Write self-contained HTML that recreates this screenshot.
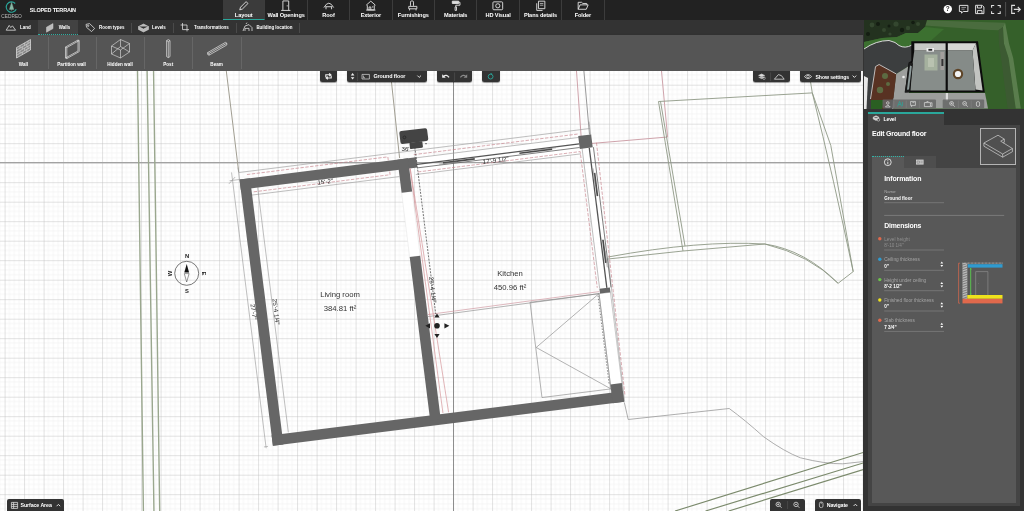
<!DOCTYPE html>
<html><head><meta charset="utf-8"><title>Cedreo - Sloped terrain</title>
<style>
*{box-sizing:border-box;margin:0;padding:0}
html,body{width:1024px;height:511px;overflow:hidden;background:#fff;font-family:"Liberation Sans",sans-serif;color:#fff}
.abs{position:absolute}
#top{position:absolute;left:0;top:0;width:1024px;height:20px;background:#222}
#bar2{position:absolute;left:0;top:20px;width:863px;height:15px;background:#333}
#bar3{position:absolute;left:0;top:35px;width:863px;height:36px;background:#555;box-shadow:0 1px 2px rgba(0,0,0,.55)}
#canvas{position:absolute;left:0;top:71px;width:864px;height:440px;background:#fff;overflow:hidden}
#right{position:absolute;left:863px;top:20px;width:161px;height:491px;background:#333}
.t{position:absolute;white-space:nowrap;line-height:1;transform-origin:0 0}
#top,#bar2,#bar3,#canvas,#right{will-change:transform}
.ttab{position:absolute;top:0;height:20px;width:42.4px;border-right:1px solid #3c3c3c}
.ttab span{position:absolute;left:0;width:100%;text-align:center;top:11.6px;font-size:5.6px;font-weight:bold;line-height:6px;white-space:nowrap;letter-spacing:-.1px}
.ttab svg{position:absolute;left:50%;top:.2px;width:11.600px;height:11.600px;margin-left:-5.800px;overflow:visible}
.sep2{position:absolute;top:22.5px;width:1px;height:10px;background:#4a4a4a}
.l2{position:absolute;top:5.4px;font-size:4.45px;font-weight:bold;line-height:5px;white-space:nowrap}
.sep3{position:absolute;top:37px;width:1px;height:32px;background:#666}
.l3{position:absolute;top:62px;width:48px;text-align:center;font-size:4.6px;font-weight:bold;line-height:5px;white-space:nowrap}
.cbtn{position:absolute;background:#333;border-radius:0 0 2.500px 2.500px;height:10.900px;top:0;box-shadow:0 .5px 1px rgba(0,0,0,.4)}
.dots{background-image:radial-gradient(circle,rgba(255,255,255,.1) .45px,transparent .7px);background-size:4px 4px}
.bbtn{position:absolute;background:#333;border-radius:2px 2px 0 0;height:12px;bottom:0}
</style></head><body>
<!--TOP-->
<div id="top">
<svg class="abs" style="left:0;top:0" width="30" height="20" viewBox="0 0 30 20">
<path d="M15.2 3.5A5.2 5.2 0 1 0 16.2 9.2" fill="none" stroke="#2aa79b" stroke-width="1.1"/>
<path d="M11.6 2.4L9.4 9.4H13.8ZM11.6 9V11" fill="#86b9a6" stroke="#86b9a6" stroke-width=".4"/>
<text x="11.6" y="17.5" font-size="4.8" fill="#bdbdbd" text-anchor="middle" font-family="Liberation Sans, sans-serif">CEDREO</text>
</svg>
<div class="t" style="left:29.8px;top:7.7px;font-size:5.5px;font-weight:bold;letter-spacing:-.18px">SLOPED TERRAIN</div>
<div class="ttab dots" style="left:223px;background-color:#3b3b3b;border-bottom:1px solid #2aa79b"><svg viewBox="0 0 10 10"><path d="M1.5 8.5L2.2 6.2L7 1.4L8.6 3L3.8 7.8Z" fill="none" stroke="#ddd" stroke-width=".8"/></svg><span>Layout</span></div>
<div class="ttab" style="left:265.4px"><svg viewBox="0 0 10 10"><path d="M2.5 9V.8H7.5V9M1 9H9" fill="none" stroke="#ddd" stroke-width=".8"/><circle cx="6.2" cy="5" r=".5" fill="#ddd"/></svg><span>Wall Openings</span></div>
<div class="ttab" style="left:307.8px"><svg viewBox="0 0 10 10"><path d="M.8 6.5Q5 -1 9.2 6.5M2 5.8H8M2.6 5.8V8M7.4 5.8V8" fill="none" stroke="#ddd" stroke-width=".8"/></svg><span>Roof</span></div>
<div class="ttab" style="left:350.2px"><svg viewBox="0 0 10 10"><path d="M1 4.5L5 1L9 4.5M2 4.5V8.5H8V4.5M1 8.7H9M3.5 8.5V6H5V8.5M6 6H7.2" fill="none" stroke="#ddd" stroke-width=".8"/></svg><span>Exterior</span></div>
<div class="ttab" style="left:392.6px"><svg viewBox="0 0 10 10"><path d="M3 5V1.8Q3 .8 4 .8H4.6Q5.6 .8 5.6 1.8V5M1.5 5.5H8.5V7.6H1.5ZM2.2 7.6V9M7.8 7.6V9" fill="none" stroke="#ddd" stroke-width=".8"/></svg><span>Furnishings</span></div>
<div class="ttab" style="left:435px"><svg viewBox="0 0 10 10"><path d="M2 1H7.5V3H2ZM7.5 2H8.6V4.5H5V6M4.4 6H5.6V9H4.4Z" fill="none" stroke="#ddd" stroke-width=".8"/><rect x="2" y="1" width="5.5" height="2" fill="#ddd"/></svg><span>Materials</span></div>
<div class="ttab" style="left:477.4px"><svg viewBox="0 0 10 10"><rect x=".8" y="1.6" width="8.4" height="6.8" rx=".8" fill="none" stroke="#ddd" stroke-width=".8"/><circle cx="5" cy="5" r="1.8" fill="none" stroke="#ddd" stroke-width=".8"/></svg><span>HD Visual</span></div>
<div class="ttab" style="left:519.8px"><svg viewBox="0 0 10 10"><path d="M3 1H8.5V7.5H3ZM1.5 2.8V9H6.5" fill="none" stroke="#ddd" stroke-width=".8"/><path d="M4.2 3H7.2M4.2 4.5H7.2" stroke="#ddd" stroke-width=".6"/></svg><span>Plans details</span></div>
<div class="ttab" style="left:562.2px"><svg viewBox="0 0 10 10"><path d="M1 8V2H4L5 3H8.4V4.2M1 8L2.6 4.2H9.6L8 8Z" fill="none" stroke="#ddd" stroke-width=".8"/></svg><span>Folder</span></div>
<svg class="abs" style="left:940px;top:1px" width="84" height="18" viewBox="940 1 84 18">
<circle cx="947.800" cy="9.100" r="4.200" fill="#fff"/>
<text x="947.800" y="11.400" font-size="6.400" font-weight="bold" fill="#222" text-anchor="middle" font-family="Liberation Sans, sans-serif">?</text>
<path d="M959.400 5.400H967.900V11.500H963.200L961.500 13.100V11.500H959.400Z" fill="none" stroke="#ddd" stroke-width="1" stroke-linejoin="round"/><path d="M961.400 7.400H966M961.400 9.200H964.600" stroke="#ddd" stroke-width=".6"/>
<path d="M975.600 5.300H982.200L983.900 7V13.600H975.600ZM977.400 5.500V8H981.400V5.500M977.400 13.600V10.600H982V13.600" fill="none" stroke="#ddd" stroke-width="1" stroke-linejoin="round"/>
<path d="M991.600 7.800V5.500H994.200M997.600 5.500H1000.200V7.800M1000.200 11.200V13.500H997.600M994.200 13.500H991.600V11.200" fill="none" stroke="#ddd" stroke-width="1.100"/>
<path d="M1005.600 2V16.500" stroke="#555" stroke-width=".9"/>
<path d="M1015 5.400H1011.700V13.400H1015M1013.800 9.400H1020M1017.800 7L1020.300 9.400L1017.800 11.800" fill="none" stroke="#ddd" stroke-width="1.100"/>
</svg>
</div>

<!--BAR2-->
<div id="bar2">
<div class="abs dots" style="left:38px;top:0;width:39.5px;height:15px;background-color:#424242;border-bottom:1px dotted #2fb5a8"></div>
<svg class="abs" style="left:0;top:0" width="300" height="15" viewBox="0 20 300 15">
<g fill="none" stroke="#ddd" stroke-width=".8">
<path d="M6.2 30.2L9.2 25.4L10.8 27.6L12.4 25.8L15.6 30.2Z"/>
<path d="M46.5 27.2L53 23.6V28.6L46.5 32.2Z" fill="#bbb" stroke="#ccc" stroke-width=".5"/>
<path d="M86 24.4L89.6 23.6L94.6 28.4L91.6 31.6L86.6 27.4Z"/><circle cx="88.2" cy="25.8" r=".7"/>
<path d="M138.5 26.5L143.5 24L148.5 26.5V29.5L143.5 32L138.5 29.5ZM138.5 26.5L143.5 29L148.5 26.5" fill="#bbb" stroke="#ddd" stroke-width=".5"/>
<path d="M182.5 23V29.6H189M180.6 25H187V31.4" />
<path d="M243 31L245 26L249 24.6L252 27.6V31M245 31V28.4H249V31M246 24L247 22.6"/>
</g>
</svg>
<div class="l2" style="left:20px">Land</div>
<div class="l2" style="left:58.8px">Walls</div>
<div class="l2" style="left:99px">Room types</div>
<div class="l2" style="left:152px">Levels</div>
<div class="l2" style="left:194px">Transformations</div>
<div class="l2" style="left:256.4px">Building location</div>
</div>
<div class="sep2" style="left:131px"></div><div class="sep2" style="left:172.5px"></div><div class="sep2" style="left:235.5px"></div><div class="sep2" style="left:299px"></div>

<!--BAR3-->
<div id="bar3">
<svg class="abs" style="left:0;top:0" width="245" height="36" viewBox="0 35 245 36">
<g fill="none" stroke="#e4e4e4" stroke-width=".7" stroke-linejoin="round">
<path d="M16.5 47.5L30.5 39.5V50L16.5 58Z" fill="rgba(255,255,255,.3)"/>
<path d="M16.5 50.1L30.5 42.1M16.5 52.7L30.5 44.7M16.5 55.3L30.5 47.3M20 45.5V48.1M24.6 42.9V45.5M28 41V43.5M22.3 46.8V49.4M26.8 44.2V46.8M20 50.7V53.3M24.6 48.1V50.7M28 46.2V48.8M22.3 52V54.6M26.8 49.4V52" stroke-width=".5"/>
<path d="M65.5 47L78 40V51L65.5 58ZM65.5 47L66.8 47.6L79.2 40.6L78 40M66.8 47.6V58.6L65.5 58M66.8 58.6L79.2 51.6V40.6"/>
<path d="M111.5 46L120.5 39.5L129.5 43.5V52L120.5 58L111.5 54ZM111.5 46L120.5 50V58M120.5 50L129.5 43.5M120.5 39.5V46.5L111.5 54M120.5 46.5L129.5 52" stroke-width=".6"/>
<path d="M166.6 40.6L168.3 39.6L170 40.6V56.6L168.3 57.6L166.6 56.6ZM166.6 40.6L168.3 41.6L170 40.6M168.3 41.6V57.6"/>
<path d="M207.6 52.6L225.4 42.4L226.8 43.2V45L209 55.2L207.6 54.4ZM207.6 52.6L209 53.4L226.8 43.2M209 53.4V55.2"/>
</g>
</svg>
<div class="l3" style="left:-.6px;top:26.6px">Wall</div>
<div class="l3" style="left:47.6px;top:26.6px">Partition wall</div>
<div class="l3" style="left:96px;top:26.6px">Hidden wall</div>
<div class="l3" style="left:144.2px;top:26.6px">Post</div>
<div class="l3" style="left:192.6px;top:26.6px">Beam</div>
</div>
<div class="sep3" style="left:47.5px"></div><div class="sep3" style="left:95.7px"></div><div class="sep3" style="left:144px"></div><div class="sep3" style="left:192.4px"></div><div class="sep3" style="left:240.7px"></div>

<!--CANVAS-->
<div id="canvas">
<svg width="864" height="440" viewBox="0 71 864 440" style="position:absolute;left:0;top:0">
<defs>
<pattern id="gmin" x="4.600" y="84.700" width="19.5" height="19.5" patternUnits="userSpaceOnUse">
<path d="M4.875 0V19.5M9.75 0V19.5M14.625 0V19.5M0 4.875H19.5M0 9.75H19.5M0 14.625H19.5" stroke="#f0f0f0" stroke-width=".6" fill="none"/>
<path d="M0 0V19.5M0 0H19.5" stroke="#c4c4c4" stroke-width="1" fill="none"/>
</pattern>
</defs>
<rect x="0" y="71" width="864" height="440" fill="#fff"/>
<rect x="0" y="71" width="864" height="440" fill="url(#gmin)"/>
<g transform="translate(239.5 179.5) rotate(-7.15)"><rect x="175.500" y=".5" width="167" height="16.5" fill="#fff"/>
<rect x="343.800" y="11.5" width="11.400" height="142" fill="#fff"/>
</g>
<!-- guide lines -->
<g fill="none" stroke-width=".8">
<path d="M0 162.700H864" stroke="#a2a2a2" stroke-width="1.200"/>
<path d="M453.5 71V511" stroke="#777"/>
<!-- left olive verticals -->
<path d="M137.500 71L143.400 511M147.100 71L153.950 511M153.550 71L159.700 511" stroke="#9aa78e" stroke-width="1.400"/>
<path d="M226.300 71L238.700 172" stroke="#a19e92" stroke-width="1"/>
<path d="M390.300 71L399.600 158" stroke="#a19e92" stroke-width="1"/>
<path d="M583.900 71L589.500 134.500" stroke="#999" stroke-width="1"/>
<path d="M576.500 71L581.100 136" stroke="#cfa3ab" stroke-width="1"/>
<path d="M661.500 71L667.600 137L591 143.500" stroke="#cfa3ab" stroke-width="1"/>
<!-- terrain right -->
<path d="M658.5 101.5L812.3 92.9M808.800 71L812.3 92.9L830.8 145.5L853.2 271.6L838.1 283.3Q805 250 764.9 244L683 251L658.5 101.5M812.3 92.9Q834 180 853.2 271.6M660.5 101.4L685 246M608 257Q700 240 764.9 244Q810 255 838.1 283.3M608 259L683 251" stroke="#8f9886" stroke-width=".9"/>
<!-- lower right -->
<path d="M624.3 402.4L628.2 419.5L729.2 408.5Q745 420 763.5 436.7Q785 452 800.4 457.8Q825 464 842.6 463.8L864 461.5" stroke="#999"/>
<path d="M675 511L864 452.2M705.5 511L864 462.7M728.7 511L864 469.3" stroke="#7b8a6c" stroke-width="1.200"/>
</g>
<!--BUILDING-->
<g transform="translate(239.5 179.5) rotate(-7.15)">
<!-- dimension/offset lines -->
<g fill="none" stroke="#999" stroke-width=".6">
<path d="M-7 -8V270M-10 0H0M-9 268.400H-5M-11 3L-4 -3"/>
<path d="M0 -7H354M0 -12V0M354 -14V0"/>
<path d="M17 10V257M10 17H159"/>
<path d="M175.500 17H342M343.800 11.500V153M175.500 .5H342"/>
<path d="M355.800 124L354.500 268.400" stroke="#999"/>
</g>
<g fill="none" stroke="#c47c86" stroke-width=".6" stroke-dasharray="3.400 1.500">
<path d="M8 -4H150V14H12"/>
<path d="M176 -3H341.500M178 14.700H341.500V152M358.800 8L355.600 262"/>
</g>
<!-- white opening in interior wall -->
<rect x="159.200" y="33.300" width="10.600" height="65" fill="#fff" stroke="#ddd" stroke-width=".4"/>
<!-- white right wall lower part -->
<rect x="342.5" y="158" width="11.5" height="100" fill="#fff" stroke="#999" stroke-width=".5"/>
<!-- thick walls -->
<g fill="#666">
<rect x="0" y="0" width="178" height="10.300"/>
<rect x="0" y="0" width="10.600" height="268.400"/>
<rect x="0" y="257.800" width="354" height="10.600"/>
<rect x="159.200" y="0" width="10.600" height="33.300"/>
<rect x="159.200" y="98.200" width="10.600" height="165"/>
<rect x="341.500" y="-1" width="13" height="13"/>
<rect x="343.500" y="153.300" width="10.500" height="4.700"/>
<rect x="342.500" y="249.500" width="11.500" height="18.900"/>
</g>
<!-- thin walls kitchen -->
<g fill="none" stroke="#555">
<path d="M178 7H341.500" stroke-width="1.300"/>
<path d="M178 10.600H341.500" stroke-width=".8" stroke="#666"/>
<path d="M351 12V153.300" stroke-width="1.300"/>
<path d="M355.200 12V153.300" stroke-width=".8" stroke="#666"/>
<path d="M204 8.800H236M281 8.800H314M353.100 37.700V61M353.100 105V128.300" stroke-width="1.700" stroke="#4a4a4a"/>
<path d="M200 9.700H218M296 7.900H318M352.200 33V50M354 116V133" stroke-width=".6" stroke="#888"/>
</g>
<path d="M341.300 160V250" stroke="#666" stroke-width=".7" stroke-dasharray="1.500 1.500" fill="none"/>
<!-- room separation -->
<path d="M170 157.500L343 156" stroke="#d4a0a8" stroke-width=".7" fill="none"/>
<path d="M170 159.500L343 158" stroke="#999" stroke-width=".7" fill="none"/>
<!-- stairs rect -->
<path d="M273 158H342.500V254H273ZM342.500 158L273.500 203.600L342.500 254" stroke="#888" stroke-width=".6" fill="none"/>
<!-- interior thin lines right of interior wall -->
<path d="M170.600 10.300L172.800 257M170.800 10.300L178.500 257" stroke="#d08a90" stroke-width=".6" fill="none"/>
<path d="M178 -10V158" stroke="#444" stroke-width=".7" stroke-dasharray="2 1.2" fill="none"/>
</g>
<!--/BUILDING-->
<!-- compass -->
<g font-family="Liberation Sans, sans-serif" font-weight="bold" font-size="5.8" fill="#222" text-anchor="middle">
<circle cx="186.7" cy="273.3" r="12" fill="none" stroke="#555" stroke-width=".8"/>
<path d="M186.7 264L184.3 272.6H189.1Z" fill="#111"/>
<path d="M184.3 273.6H189.1L186.7 282Z" fill="#fff" stroke="#333" stroke-width=".5"/>
<text x="187" y="258">N</text>
<text x="187" y="293.2">S</text>
<text transform="translate(171.6 273.4) rotate(-90)">W</text>
<text transform="translate(202 273.4) rotate(90)">E</text>
</g>
<!-- camera -->
<g transform="translate(413.8 136.2) rotate(-7)">
<rect x="-14" y="-6.6" width="28" height="13" rx="2" fill="#444"/>
<rect x="-5.2" y="6" width="13" height="6.4" rx="1" fill="#444"/>
<circle cx="-9.4" cy="0" r="1.4" fill="none" stroke="#222" stroke-width=".6"/>
</g>
<g font-family="Liberation Sans, sans-serif" fill="#333" text-anchor="middle">
<text x="340" y="297" font-size="7.7">Living room</text>
<text x="340" y="310.8" font-size="7.7">384.81 ft²</text>
<text x="510" y="275.8" font-size="7.7">Kitchen</text>
<text x="510" y="289.8" font-size="7.7">450.96 ft²</text>
<g font-size="6.2" fill="#222">
<text transform="translate(325.5 183.8) rotate(-7.15)">15'-2"</text>
<text transform="translate(496 162.4) rotate(-7.15)">17'-9 1/2"</text>
<text transform="translate(274 312) rotate(82.85)">25'-4 1/4"</text>
<text transform="translate(251.6 312) rotate(82.85)">27'-7"</text>
<text transform="translate(430.6 290) rotate(82.85)">25'-4 1/4"</text>
<text x="405.5" y="150.6">36'</text>
<text x="426" y="147">"</text>
</g>
</g>
<!-- move cursor -->
<g fill="#222"><circle cx="437" cy="325.8" r="2.8"/><path d="M437 313.600L439.600 317.600H434.400ZM437 338L439.600 334H434.400ZM425.400 325.800L430 323.200V328.400ZM449.400 325.800L444.400 323.200V328.400Z"/></g>
<!--/LABELS-->
</svg>
<!-- canvas toolbar buttons -->
<div class="cbtn" style="left:320px;width:17px"><svg class="abs" style="left:0;top:0" width="17" height="11.5" viewBox="0 0 17 11.5"><path d="M5.800 6.200V3.800H10.400M9.200 2.400L10.800 3.800L9.200 5.200M11.200 4.600V7H6.600M7.800 5.600L6.200 7L7.800 8.400" fill="none" stroke="#eee" stroke-width="1.100"/></svg></div>
<div class="cbtn" style="left:347px;width:80px"><svg class="abs" style="left:0;top:0" width="80" height="11.5" viewBox="0 0 80 11.5"><path d="M3.800 4.400L5.600 2L7.400 4.400ZM3.800 6.200L5.600 8.600L7.400 6.200Z" fill="#eee"/><path d="M10.6 1.5V10" stroke="#555" stroke-width=".6"/><path d="M15 3.4H22.4V8H15ZM16.4 4.6V6.8H18" fill="none" stroke="#ddd" stroke-width=".7"/><path d="M70.4 4.6L72.2 6.4L74 4.6" fill="none" stroke="#eee" stroke-width=".9"/></svg><div class="t" style="left:26.400px;top:3.100px;font-size:5.400px;font-weight:bold;letter-spacing:-.08px">Ground floor</div></div>
<div class="cbtn" style="left:436.5px;width:35.5px"><svg class="abs" style="left:0;top:0" width="35.5" height="11.5" viewBox="0 0 35.5 11.5"><path d="M6.600 5.400Q9.400 3 12 6.400" fill="none" stroke="#eee" stroke-width="1.300"/><path d="M5.200 3.200V6.800H8.800Z" fill="#eee"/><path d="M17.6 1.5V10" stroke="#555" stroke-width=".6"/><path d="M28.800 5.400Q26 3 23.400 6.400" fill="none" stroke="#8a8a8a" stroke-width="1.200"/><path d="M30.200 3.200V6.800H26.600Z" fill="#8a8a8a"/></svg></div>
<div class="cbtn" style="left:482px;width:17.5px"><svg class="abs" style="left:0;top:0" width="17.5" height="11.5" viewBox="0 0 17.5 11.5"><circle cx="8.6" cy="5.6" r="2.4" fill="none" stroke="#2aa79b" stroke-width=".9"/><path d="M8.6 2V3.6L10.4 2.8Z" fill="#2aa79b"/></svg></div>
<div class="cbtn" style="left:753.400px;width:36.600px"><svg class="abs" style="left:0;top:0" width="35.5" height="11.5" viewBox="0 0 35.5 11.5"><path d="M5.6 4.4L8.6 3L11.6 4.4L8.6 5.8ZM5.6 6.2L8.6 7.6L11.6 6.2" fill="#ddd" stroke="#ddd" stroke-width=".6"/><circle cx="11" cy="7.2" r="1.3" fill="none" stroke="#ddd" stroke-width=".5"/><path d="M17.6 1.5V10" stroke="#555" stroke-width=".6"/><path d="M21.4 8.2L25.4 3.6L28.4 4.6L31.2 8.2Z" fill="none" stroke="#ddd" stroke-width=".8"/></svg></div>
<div class="cbtn" style="left:799.5px;width:61px"><svg class="abs" style="left:0;top:0" width="61" height="11.5" viewBox="0 0 61 11.5"><path d="M4.4 5.6Q8 1.6 11.6 5.6Q8 9.6 4.4 5.6Z" fill="none" stroke="#ddd" stroke-width=".8"/><circle cx="8" cy="5.6" r="1.3" fill="none" stroke="#ddd" stroke-width=".7"/><path d="M52.6 4.6L54.4 6.4L56.2 4.6" fill="none" stroke="#eee" stroke-width=".9"/></svg><div class="t" style="left:16px;top:3.500px;font-size:5.200px;font-weight:bold;letter-spacing:-.12px">Show settings</div></div>
<div class="bbtn" style="left:6.900px;width:56.700px;height:11.600px"><svg class="abs" style="left:0;top:0" width="57" height="12" viewBox="0 0 57 12"><path d="M4.4 3.4H10.6V9.4H4.4ZM4.4 5.4H10.6M4.4 7.4H10.6M6.6 3.4V9.4" fill="none" stroke="#ddd" stroke-width=".8"/><path d="M49.6 7.2L51.4 5.4L53.2 7.2" fill="none" stroke="#eee" stroke-width=".9"/></svg><div class="t" style="left:13.6px;top:3.8px;font-size:5.3px;font-weight:bold;letter-spacing:-.1px">Surface Area</div></div>
<div class="bbtn" style="left:769.500px;width:35.500px;height:11.800px"><svg class="abs" style="left:0;top:0" width="35.5" height="11.5" viewBox="0 0 35.5 11.5"><circle cx="8.2" cy="5.4" r="2.2" fill="none" stroke="#ddd" stroke-width=".8"/><path d="M9.8 7L11.6 8.8M7.2 5.4H9.2M8.2 4.4V6.4" stroke="#ddd" stroke-width=".8"/><path d="M17.6 2V10" stroke="#555" stroke-width=".6"/><circle cx="26" cy="5.4" r="2.2" fill="none" stroke="#ddd" stroke-width=".8"/><path d="M27.6 7L29.4 8.8M25 5.4H27" stroke="#ddd" stroke-width=".8"/></svg></div>
<div class="bbtn" style="left:814.500px;width:46.200px;height:11.800px"><svg class="abs" style="left:0;top:0" width="47" height="11.5" viewBox="0 0 47 11.5"><rect x="4.4" y="3" width="3.6" height="5.6" rx="1.6" fill="none" stroke="#ddd" stroke-width=".7"/><path d="M6.2 3V5" stroke="#ddd" stroke-width=".6"/><path d="M38.6 7L40.4 5.2L42.2 7" fill="none" stroke="#eee" stroke-width=".9"/></svg><div class="t" style="left:12.2px;top:3.4px;font-size:5.3px;font-weight:bold;letter-spacing:-.1px">Navigate</div></div>
</div>
<!--RIGHT-->
<div id="right">
<!--3D-->
<svg class="abs" style="left:1px;top:0" width="160" height="88.6" viewBox="864 20 160 88.6">
<rect x="864" y="20" width="160" height="89" fill="#35602a"/>
<path d="M925 20.300L1005.100 22.700L1003 27L998.500 30.200L984 29.800L925 25.600Z" fill="#4a6c3e"/>
<path d="M1003 27L1004 43.500L1008.600 58L1015.750 108.600H1007.600L1001 58L998.900 43.500L998.500 30.200Z" fill="#3c5a32"/>
<path d="M1005.100 22.700L1006.500 30L1009 43.500L1013.200 58L1020.800 108.600H1015.750L1008.600 58L1004 43.500L1003 27Z" fill="#5a7d4d"/>
<path d="M864 20H927L925 27L918 33L906 33L897 37L882 38L864 42Z" fill="#23321f"/>
<g fill="#34472f"><circle cx="872" cy="25" r="2.400"/><circle cx="884" cy="30" r="2"/><circle cx="896" cy="24" r="2.600"/><circle cx="908" cy="28" r="2.200"/><circle cx="918" cy="24" r="2"/><circle cx="890" cy="34" r="1.600"/></g>
<g fill="#141d12"><circle cx="878" cy="24" r="2"/><circle cx="902" cy="30" r="2.200"/><circle cx="913" cy="22.500" r="1.800"/><circle cx="868" cy="34" r="2"/><circle cx="889" cy="26" r="1.500"/></g>
<path d="M864 42L882 38L897 37L906 33L918 33L925 27L944 29L926 45H912Q905 49 899 45.500Q896 42 889 40.500Q876 40.500 864 49Z" fill="#3c7030"/>
<path d="M864 49Q876 40.500 889 40.500Q896 42 899 45.500Q905 49 912 45V64L896 74L894 109H864Z" fill="#3c3e3f"/>
<path d="M864 49Q876 40.500 889 40.500Q896 42 899 45.500Q905 49 912 45" fill="none" stroke="#d8d8d8" stroke-width="1"/>
<path d="M864 76L868 78L866.500 109H864Z" fill="#e8e8e8"/>
<path d="M896.200 73.900L909 66V93L904 100L893 109H892Z" fill="#9d9f9d"/>
<path d="M872 109L870.500 99L875.500 66.600L879.100 64.500L896.200 73.900L893.500 98L884 109Z" fill="#583222"/>
<path d="M870.500 99L875.500 66.600L879.100 64.500L896.200 73.900" fill="none" stroke="#ddd" stroke-width=".8"/>
<g fill="#5e7a4a" opacity=".8"><circle cx="885" cy="76" r="3"/><circle cx="880" cy="90" r="3.200"/><circle cx="888" cy="84" r="2"/></g>
<path d="M871 100H884L882 109H871Z" fill="#2a5f22"/>
<circle cx="903.500" cy="77" r="1.300" fill="#eee"/>
<!-- house -->
<path d="M911.300 41.300H978L984.800 92.600H905L908.600 62.500L911.300 61Z" fill="#0c0c0c"/>
<path d="M914.300 43.300H945.600V50.600H914.300Z" fill="#c6c8c5"/>
<path d="M947.800 43.300H976L972.500 50.600H947.800Z" fill="#d6d7d4"/>
<path d="M976 43.300L982.600 90.400L975.500 89.600L972.500 50.600Z" fill="#c2c4c1"/>
<path d="M914.300 50.600H945.600V90.600H910.500L912.600 63Z" fill="#878d8a"/>
<path d="M947.800 50.600H972.500L975.500 90.600H947.800Z" fill="#858b88"/>
<rect x="926.5" y="48" width="7.5" height="3.6" fill="#eee"/><rect x="928.4" y="48.9" width="3.8" height="1.8" fill="#222"/>
<rect x="924.5" y="54.5" width="13" height="16" fill="#a9b5a0" opacity=".9"/><rect x="928" y="58" width="6" height="9" fill="#b9c2b0"/>
<rect x="940.4" y="52" width="3.6" height="18" fill="#a29e9c"/><rect x="941.4" y="59" width="2" height="7" fill="#333"/>
<circle cx="958" cy="74" r="5.2" fill="#5e4427"/><circle cx="958" cy="74" r="3.1" fill="#f2f2f2"/>
<path d="M909.4 62L913 63.6L909.6 92L904.6 92.6Z" fill="#1c1c1c"/><path d="M910 65.4L911.8 66.2L909 89.6L907 89.8Z" fill="#8d9a9a"/>
<path d="M904 93H985L988 108.600H894Z" fill="#9c9e9c"/>
<path d="M945.8 93H948V101H945.8Z" fill="#ddd"/>
<!-- toolbar -->
<rect x="882.500" y="99.600" width="53.500" height="9" rx="1" fill="#666" opacity=".85"/>
<rect x="942.700" y="99.600" width="41.500" height="9" rx="1" fill="#666" opacity=".85"/>
<g fill="none" stroke="#ddd" stroke-width=".7">
<circle cx="887.800" cy="103" r="1.300"/><path d="M885.400 107Q887.800 103.600 890.200 107Z"/>
<path d="M897.600 106.500L899.600 101.500L901.600 106.500M898.400 104.500H900.800M902.400 102V106" stroke="#2aa79b"/>
<path d="M910.600 101.400H915.400V105.400H910.600ZM911.600 105.400V107M912.400 102.600H914.400"/>
<path d="M924.400 102.600H930.400V106.600H924.400ZM926 102.600L926.800 101.600H928.400M930.400 103.400L932 102.600V106.600L930.400 105.800"/>
<circle cx="951.600" cy="103.400" r="1.900"/><path d="M953 104.900L954.800 106.800M950.700 103.400H952.500M951.600 102.500V104.300"/>
<circle cx="964.600" cy="103.400" r="1.900"/><path d="M966 104.900L967.800 106.800M963.700 103.400H965.500"/>
<rect x="976.400" y="101.600" width="3.200" height="4.800" rx="1.400"/>
</g>
<path d="M893.800 100.500V108M906.200 100.500V108M919.400 100.500V108M958.400 100.500V108M971.200 100.500V108" stroke="#888" stroke-width=".5"/>
</svg>
<!--/3D-->
<div class="abs" style="left:0;top:88.6px;width:161px;height:403px;background:#333"></div>
<div class="abs" style="left:5px;top:92px;width:76px;height:13px;background:#444;border-top:2px solid #2aa79b"></div>
<div class="abs" style="left:5.4px;top:104.7px;width:151.6px;height:381px;background:#444"></div><div class="abs dots" style="left:5.4px;top:104.7px;width:112px;height:43px"></div>
<div class="abs" style="left:8.8px;top:147.9px;width:144.2px;height:335.1px;background:#585858"></div>
<div class="abs" style="left:8.8px;top:135.8px;width:32px;height:12.4px;background:#585858;border-top:1px dotted #2fb5a8"></div>
<div class="abs" style="left:40.8px;top:136.4px;width:32px;height:11.6px;background:#4e4e4e"></div>
<div class="abs" style="left:117px;top:108.100px;width:36.200px;height:36.500px;background:#505050;border:.7px solid #b4b4b4"></div>
<svg class="abs" style="left:0;top:88px" width="161" height="403" viewBox="863 108 161 403">
<g fill="none" stroke="#e8e8e8" stroke-width=".6" stroke-linejoin="round">
<path d="M873.2 117.2L876 115.8L878.8 117.2V119L876 120.4L873.2 119ZM873.2 117.2L876 118.6L878.8 117.2" fill="#ccc" stroke-width=".5"/>
<circle cx="878.4" cy="119.8" r="1.3" fill="#444"/>
<path d="M983.900 143L998 135.200L1004.300 139.100L1000.700 141.200L1012.400 148.500L1002.700 154ZM983.900 143V146.200L1002.700 157.200V154M1002.700 157.200L1012.400 151.700V148.500M1004.300 139.100V142.300L1003.200 142.900"/>
<circle cx="887.800" cy="162.200" r="3.400" stroke-width=".9"/><path d="M887.800 160.200V160.900M887.800 161.700V164.300" stroke-width=".9"/>
<rect x="916" y="159.6" width="7.6" height="5" fill="#ccc" stroke="none"/><path d="M917 161H919.4V163.2H917ZM920.4 161.2H922.8M920.4 162.8H922.8" stroke="#555" stroke-width=".4"/>
</g>
<g fill="none" stroke="#8a8a8a" stroke-width=".6">
<path d="M884.2 202.7H944M884.2 250H944M884.2 270.3H944M884.2 290.7H944M884.2 311H944M884.2 331.4H944"/>
<path d="M884.2 215.4H1004.2" stroke="#7a7a7a" stroke-width="1"/>
</g>
<g fill="#fff"><path d="M940.4 263.6L941.8 261.6L943.2 263.6ZM940.4 265L941.8 267L943.2 265Z"/><path d="M940.4 284L941.8 282L943.2 284ZM940.4 285.4L941.8 287.4L943.2 285.4Z"/><path d="M940.4 304.3L941.8 302.3L943.2 304.3ZM940.4 305.7L941.8 307.7L943.2 305.7Z"/><path d="M940.4 324.7L941.8 322.7L943.2 324.7ZM940.4 326.1L941.8 328.1L943.2 326.1Z"/></g>
<circle cx="879.8" cy="238.8" r="1.7" fill="#e0694c"/><circle cx="879.8" cy="259.2" r="1.7" fill="#2f9bd0"/><circle cx="879.8" cy="279.6" r="1.7" fill="#6cc24a"/><circle cx="879.8" cy="300" r="1.7" fill="#efe31c"/><circle cx="879.8" cy="320.3" r="1.7" fill="#e0694c"/>
<!-- diagram -->
<path d="M960 263.2H958.6V303.2H960" fill="none" stroke="#e0694c" stroke-width=".7"/>
<rect x="962.5" y="263.2" width="4.8" height="35.6" fill="#b8b8b8"/><path d="M962.5 265L967.3 263.4M962.5 267.4L967.3 265.8M962.5 269.8L967.3 268.2M962.5 272.2L967.3 270.6M962.5 274.6L967.3 273M962.5 277L967.3 275.4M962.5 279.4L967.3 277.8M962.5 281.8L967.3 280.2M962.5 284.2L967.3 282.6M962.5 286.6L967.3 285M962.5 289L967.3 287.4M962.5 291.4L967.3 289.8M962.5 293.8L967.3 292.2M962.5 296.2L967.3 294.6M962.5 298.6L967.3 297" stroke="#444" stroke-width=".5"/>
<rect x="967.800" y="264.200" width="34.700" height="3.400" fill="#2f9bd0"/>
<path d="M962.5 263.1H1002.5" stroke="#fff" stroke-width=".6" stroke-dasharray=".8 .6"/>
<path d="M970.700 268V295" stroke="#5bc24f" stroke-width="1"/><path d="M969.700 269.600L970.700 267.800L971.700 269.600ZM969.700 293.400L970.700 295.200L971.700 293.400Z" fill="#5bc24f"/>
<path d="M975.700 295V271.600H987.900V295" fill="none" stroke="#8c8c8c" stroke-width=".7"/><circle cx="978.600" cy="283.600" r=".4" fill="#8c8c8c"/>
<rect x="967.3" y="295" width="35.2" height="3.8" fill="#efe31c"/>
<rect x="962.5" y="298.8" width="40" height="4.6" fill="#e0694c"/>
</svg>
<div class="t" style="left:20.4px;top:96.800px;font-size:5.100px;font-weight:bold;letter-spacing:-.1px">Level</div>
<div class="t" style="left:9px;top:109.8px;font-size:7px;font-weight:bold;letter-spacing:-.22px">Edit Ground floor</div>
<div class="t" style="left:21.2px;top:155.2px;font-size:7px;font-weight:bold;letter-spacing:-.12px">Information</div>
<div class="t" style="left:21.2px;top:170.4px;font-size:4.2px;color:#aaa">Name:</div>
<div class="t" style="left:21.2px;top:177px;font-size:4.6px;font-weight:bold">Ground floor</div>
<div class="t" style="left:21.2px;top:203.300px;font-size:6.900px;font-weight:bold;letter-spacing:-.22px">Dimensions</div>
<div class="t" style="left:21.2px;top:217.7px;font-size:4.75px;color:#8e8e8e">Level height</div>
<div class="t" style="left:21.2px;top:224.300px;font-size:4.600px;color:#909090">8'-10 1/4"</div>
<div class="t" style="left:21.2px;top:238.1px;font-size:4.75px;color:#a4a4a4">Ceiling thickness</div>
<div class="t" style="left:21.2px;top:244.6px;font-size:4.6px;font-weight:bold">0"</div>
<div class="t" style="left:21.2px;top:258.5px;font-size:4.75px;color:#a4a4a4">Height under ceiling</div>
<div class="t" style="left:21.2px;top:265.0px;font-size:4.6px;font-weight:bold">8'-2 1/2"</div>
<div class="t" style="left:21.2px;top:278.8px;font-size:4.75px;color:#a4a4a4">Finished floor thickness</div>
<div class="t" style="left:21.2px;top:285.3px;font-size:4.6px;font-weight:bold">0"</div>
<div class="t" style="left:21.2px;top:299.2px;font-size:4.75px;color:#a4a4a4">Slab thickness</div>
<div class="t" style="left:21.2px;top:305.7px;font-size:4.6px;font-weight:bold">7 3/4"</div>
</div>

</body></html>
